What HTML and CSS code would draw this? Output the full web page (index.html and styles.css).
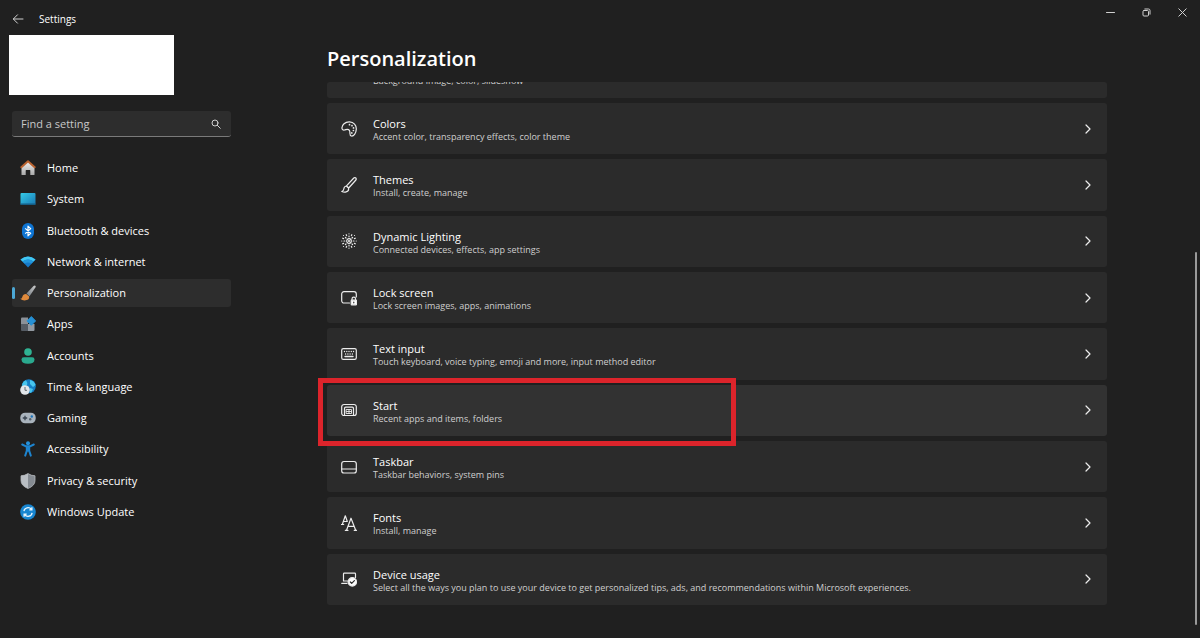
FILE: index.html
```html
<!DOCTYPE html>
<html lang="en">
<head>
<meta charset="utf-8">
<meta name="viewport" content="width=device-width, initial-scale=1">
<title>Settings</title>
<link rel="stylesheet" href="styles.css">
</head>
<body>
<div class="window">
  <header class="titlebar">
    <button class="back" type="button" aria-label="Back">
      <svg width="12" height="12" viewBox="0 0 12 12" class="line thin"><path d="M11 6H1.500M5.500 1.800L1.300 6l4.200 4.200"/></svg>
    </button>
    <span class="app-name">Settings</span>
    <div class="controls">
      <button type="button" aria-label="Minimize"><svg width="9" height="9" viewBox="0 0 9 9" class="line thin"><path d="M.5 4.500h8"/></svg></button>
      <button type="button" aria-label="Restore"><svg width="9" height="9" viewBox="0 0 9 9" class="line thin"><rect x="1" y="2.500" width="5.500" height="5.500" rx="1"/><path d="M2.800 1h3.700A1.500 1.500 0 0 1 8 2.500v3.700"/></svg></button>
      <button type="button" aria-label="Close"><svg width="9" height="9" viewBox="0 0 9 9" class="line thin"><path d="M.8.8l7.400 7.400M8.200.8L.8 8.200"/></svg></button>
    </div>
  </header>

  <div class="body">
    <aside class="sidebar">
      <div class="account"></div>
      <form class="search" role="search">
        <input type="search" aria-label="Find a setting" placeholder="Find a setting">
        <button type="submit" aria-label="Search"><svg width="10" height="10" viewBox="0 0 10 10" class="line thin"><circle cx="4" cy="4" r="3"/><path d="M6.300 6.300L9.300 9.300"/></svg></button>
      </form>
      <nav class="nav">
        <a href="#home"><svg width="16" height="16" viewBox="0 0 16 16"><defs><linearGradient id="wall" x2="0" y2="1"><stop stop-color="#f2f2f2"/><stop offset="1" stop-color="#a9a9a9"/></linearGradient></defs><path d="M1.500 7L8 1l6.500 6v7.500q0 .5-.5.500H10.300v-4.500q0-.5-.5-.5H6.200q-.5 0-.5.5V15H2q-.5 0-.5-.5z" fill="url(#wall)"/><path d="M1.300 7.200L8 1.300l6.700 5.900" fill="none" stroke="#b9622f" stroke-width="2" stroke-linecap="round" stroke-linejoin="round"/></svg>Home</a>
        <a href="#system"><svg width="16" height="16" viewBox="0 0 16 16"><defs><linearGradient id="screen" x2="1" y2="1"><stop stop-color="#35cbe8"/><stop offset="1" stop-color="#1878b4"/></linearGradient></defs><rect x=".5" y="2" width="15" height="12" rx="1" fill="url(#screen)"/><path d="M.5 12.500h15v.5a1 1 0 0 1-1 1h-13a1 1 0 0 1-1-1z" fill="#155d84"/></svg>System</a>
        <a href="#bluetooth"><svg width="16" height="16" viewBox="0 0 16 16"><rect x="2" y="0" width="12" height="16" rx="6" fill="#0e74d2"/><path d="M5.200 5.400l5.500 5-2.700 2.400V3.200l2.700 2.400-5.500 5" fill="none" stroke="#fff" stroke-width="1.200" stroke-linejoin="round"/></svg>Bluetooth &amp; devices</a>
        <a href="#network"><svg width="16" height="16" viewBox="0 0 16 16"><path d="M.5 5.500Q8-.5 15.500 5.500L8 13.500z" fill="#1679c8"/><path d="M.5 5.500Q8-.5 15.500 5.500l-2 2.100Q8 3.500 2.500 7.600z" fill="#41c7f2"/><path d="M2.500 7.600Q8 3.500 13.500 7.600l-2 2Q8 7.400 4.500 9.600z" fill="#2297dc"/></svg>Network &amp; internet</a>
        <a href="#personalization" class="current" aria-current="page"><svg width="16" height="16" viewBox="0 0 16 16"><defs><linearGradient id="handle" x1="1" x2="0" y2="1"><stop stop-color="#ccc"/><stop offset="1" stop-color="#737b82"/></linearGradient></defs><path d="M15.300.7q.8.7.1 1.900L9.500 11.200 6.500 8.500 13.500 1q1-.9 1.800-.3z" fill="url(#handle)"/><path d="M6.200 8.900l3 2.700q.4 3.800-4.700 3.900-2.500 0-4.300-1.700 1.700-.1 2.100-1.900.6-3.100 3.900-3z" fill="#e08a3c"/></svg>Personalization</a>
        <a href="#apps"><svg width="16" height="16" viewBox="0 0 16 16"><path d="M2 1.500h6v6.500H1V2.500q0-1 1-1z" fill="#8b9198"/><path d="M1 8h7v7H2q-1 0-1-1z" fill="#555c64"/><path d="M8 8h6.500v6q0 1-1 1H8z" fill="#9299a1"/><path d="M11.300.5l4.300 4.400-4.300 4.400L7 4.900z" fill="#2590d4" stroke="#2590d4" stroke-linejoin="round"/></svg>Apps</a>
        <a href="#accounts"><svg width="16" height="16" viewBox="0 0 16 16"><circle cx="8" cy="4" r="3.800" fill="#2fb393"/><path d="M3.800 9.200h8.400q2.300 0 2.300 2.200 0 4.300-6.500 4.300t-6.500-4.300q0-2.200 2.300-2.200z" fill="#2aa98e"/></svg>Accounts</a>
        <a href="#time"><svg width="16" height="16" viewBox="0 0 16 16"><circle cx="8.800" cy="7.200" r="7" fill="#167fc4"/><path d="M5.500 1.200Q8 3 7 6L2.200 8Q1.500 3.500 5.500 1.200zM10 1q4.500 1 5.500 5l-2.500 2-3-3zM10 9l3 1-1.500 3.200L10 14z" fill="#47c5ed"/><circle cx="5" cy="11" r="4.800" fill="#e2e6ea"/><path d="M5 8v3.300h2" fill="none" stroke="#626970"/></svg>Time &amp; language</a>
        <a href="#gaming"><svg width="16" height="16" viewBox="0 0 16 16"><rect x=".3" y="2.700" width="15.400" height="10.600" rx="4.800" fill="#a9b3bc"/><path d="M5 5.800v4.400M2.800 8h4.400" stroke="#38434f" stroke-width="1.300"/><circle cx="11.800" cy="6.500" r="1.200" fill="#1974bd"/><circle cx="10.200" cy="9.300" r="1.200" fill="#52616d"/></svg>Gaming</a>
        <a href="#accessibility"><svg width="16" height="16" viewBox="0 0 16 16"><circle cx="8" cy="2.300" r="2" fill="#2492dc"/><path d="M2.200 3.500L6 5.300h4l3.800-1.800M6.800 5.800v4.100L5.200 14.600M9.200 5.800v4.100l1.600 4.700" fill="none" stroke="#1d84cf" stroke-width="2" stroke-linecap="round" stroke-linejoin="round"/><path d="M6.500 5h3v5.500h-3z" fill="#1d84cf"/></svg>Accessibility</a>
        <a href="#privacy"><svg width="16" height="16" viewBox="0 0 16 16"><path d="M8 .6q3 2.100 7 2.200v4.700q0 5.200-7 8z" fill="#858b92"/><path d="M8 .6Q5 2.700 1 2.800v4.700q0 5.200 7 8z" fill="#b9bec3"/><path d="M8 .6q3 2.100 7 2.200v4.700q0 5.200-7 8-7-2.800-7-8V2.800Q5 2.700 8 .6z" fill="none" stroke="#b5b9bd" stroke-width=".8"/></svg>Privacy &amp; security</a>
        <a href="#update"><svg width="16" height="16" viewBox="0 0 16 16"><circle cx="8" cy="8" r="7.800" fill="#1786d1"/><path d="M3.900 7.200a4.200 4.200 0 0 1 7.500-1.900M12.100 8.800a4.200 4.200 0 0 1-7.500 1.900M11.900 3.200v2.600H9.300M4.100 12.800v-2.600h2.600" fill="none" stroke="#e8f5fd" stroke-width="1.300"/></svg>Windows Update</a>
      </nav>
    </aside>

    <main class="content">
      <h1>Personalization</h1>
      <button class="card scrolled" type="button"><span class="icon"></span><span class="hint">Background image, color, slideshow</span></button>
      <div class="cards">
        <button class="card" type="button">
          <svg class="icon line" width="16" height="16" viewBox="0 0 16 16"><path d="M1 7.500C.5 4 4.400.7 8.500.9c4.200.2 7 3.200 6.800 7.200-.2 4.500-2.700 7.200-4.900 6.900-2.600-.4-.7-3.700-2-5.600C7 7.300 5.300 8.600 3.600 9 2 9.300 1.200 8.700 1 7.500z"/><path d="M8.500 3.700h.01M11 4.700h.01M12.500 6.900h.01M12.400 9.500h.01M10.800 11.900h.01" stroke-width="1.700"/></svg>
          <span class="text"><span class="name">Colors</span><span class="hint">Accent color, transparency effects, color theme</span></span>
          <svg class="chevron line" width="6" height="10" viewBox="0 0 6 10"><path d="M1 1l4 4-4 4"/></svg>
        </button>
        <button class="card" type="button">
          <svg class="icon line" width="16" height="16" viewBox="0 0 16 16"><path d="M5.500 8.800L12.800 1q1.100-.8 2 0 .8.900.1 2L7.700 11zM5.300 9Q3 9.400 2.800 12q-.2 1.700-2 2.500 2.200 1 4.300.4 3.100-.8 2.400-3.800z"/></svg>
          <span class="text"><span class="name">Themes</span><span class="hint">Install, create, manage</span></span>
          <svg class="chevron line" width="6" height="10" viewBox="0 0 6 10"><path d="M1 1l4 4-4 4"/></svg>
        </button>
        <button class="card" type="button">
          <svg class="icon line" width="16" height="16" viewBox="0 0 16 16"><circle cx="8" cy="8" r="2.300"/><circle cx="8" cy="8" r=".5"/><path d="M8 3.800V3M8 12.200v.8M3.800 8H3M12.200 8h.8M5 5l-.6-.6M11 11l.6.6M5 11l-.6.6M11 5l.6-.6M8 .8v.01M8 15.200v.01M.8 8h.01M15.200 8h.01M2.500 2.500h.01M13.500 2.500h.01M2.500 13.500h.01M13.500 13.500h.01M5.200 1.700l.4.900M10.800 1.700l-.4.900M5.200 14.300l.4-.9M10.800 14.300l-.4-.9M1.700 5.200l.9.400M14.300 5.200l-.9.400M1.700 10.800l.9-.4M14.300 10.800l-.9-.4"/></svg>
          <span class="text"><span class="name">Dynamic Lighting</span><span class="hint">Connected devices, effects, app settings</span></span>
          <svg class="chevron line" width="6" height="10" viewBox="0 0 6 10"><path d="M1 1l4 4-4 4"/></svg>
        </button>
        <button class="card" type="button">
          <svg class="icon line" width="16" height="16" viewBox="0 0 16 16"><path d="M8.500 13H3a2.300 2.300 0 0 1-2.300-2.300V4A2.300 2.300 0 0 1 3 1.700h10A2.300 2.300 0 0 1 15.300 4v3"/><path d="M11 10V9a1.800 1.800 0 0 1 3.600 0v1"/><rect x="10.200" y="10.200" width="5.300" height="4.600" rx=".6" fill="#fff"/><path d="M12.800 12.200v.6" stroke="#2b2b2b"/></svg>
          <span class="text"><span class="name">Lock screen</span><span class="hint">Lock screen images, apps, animations</span></span>
          <svg class="chevron line" width="6" height="10" viewBox="0 0 6 10"><path d="M1 1l4 4-4 4"/></svg>
        </button>
        <button class="card" type="button">
          <svg class="icon line" width="16" height="16" viewBox="0 0 16 16"><rect x=".7" y="2.700" width="14.600" height="10.600" rx="1.600"/><path d="M4 10.500h8M3.500 5.500h.01M5.800 5.500h.01M8 5.500h.01M10.300 5.500h.01M12.500 5.500h.01M4.600 8h.01M6.900 8h.01M9.100 8h.01M11.400 8h.01" stroke-width="1.400"/></svg>
          <span class="text"><span class="name">Text input</span><span class="hint">Touch keyboard, voice typing, emoji and more, input method editor</span></span>
          <svg class="chevron line" width="6" height="10" viewBox="0 0 6 10"><path d="M1 1l4 4-4 4"/></svg>
        </button>
        <button class="card hovered" type="button">
          <svg class="icon line" width="16" height="16" viewBox="0 0 16 16"><path d="M3.500 13.500H3A2.300 2.300 0 0 1 .7 11.200V4.800A2.300 2.300 0 0 1 3 2.500h10a2.300 2.300 0 0 1 2.300 2.300v6.400A2.300 2.300 0 0 1 13 13.500z"/><path d="M3.500 13.500V6.500a1.300 1.300 0 0 1 1.300-1.300h6.400a1.300 1.300 0 0 1 1.300 1.300v7"/><path d="M5.500 7.500h5v4h-5zM8 7.500v4M5.500 9.500h5" stroke-width=".9"/></svg>
          <span class="text"><span class="name">Start</span><span class="hint">Recent apps and items, folders</span></span>
          <svg class="chevron line" width="6" height="10" viewBox="0 0 6 10"><path d="M1 1l4 4-4 4"/></svg>
          <span class="highlight"></span>
        </button>
        <button class="card" type="button">
          <svg class="icon line" width="16" height="16" viewBox="0 0 16 16"><rect x=".7" y="2.500" width="14.600" height="11.500" rx="2.300"/><path d="M.7 10h14.600"/></svg>
          <span class="text"><span class="name">Taskbar</span><span class="hint">Taskbar behaviors, system pins</span></span>
          <svg class="chevron line" width="6" height="10" viewBox="0 0 6 10"><path d="M1 1l4 4-4 4"/></svg>
        </button>
        <button class="card" type="button">
          <svg class="icon line" width="16" height="16" viewBox="0 0 16 16"><path d="M1.300 9.500L4.300.8l2 5.700M2.500 6.500h3.300M.5 9.500h2.200M5.500 15.300L10 3.200l4.700 12.100M7 11.300h6M4.300 15.300H7M13.200 15.300h2.500"/></svg>
          <span class="text"><span class="name">Fonts</span><span class="hint">Install, manage</span></span>
          <svg class="chevron line" width="6" height="10" viewBox="0 0 6 10"><path d="M1 1l4 4-4 4"/></svg>
        </button>
        <button class="card" type="button">
          <svg class="icon line" width="16" height="16" viewBox="0 0 16 16"><path d="M.7 12.300H6M2.500 10V3q0-.8.8-.8h10.400q.8 0 .8.800v3.500M2.500 10H6.500"/><circle cx="11.300" cy="10.900" r="4.200" fill="#fff"/><path d="M9.300 11l1.400 1.400 2.700-2.800" stroke="#2b2b2b"/></svg>
          <span class="text"><span class="name">Device usage</span><span class="hint">Select all the ways you plan to use your device to get personalized tips, ads, and recommendations within Microsoft experiences.</span></span>
          <svg class="chevron line" width="6" height="10" viewBox="0 0 6 10"><path d="M1 1l4 4-4 4"/></svg>
        </button>
      </div>
      <div class="scroll-thumb"></div>
    </main>
  </div>
</div>
</body>
</html>
```
FILE: styles.css
```css
* { box-sizing: border-box; }

body {
  margin: 0;
  background: #202020;
  color: #fff;
  font-family: "Open Sans", "Noto Sans", sans-serif;
  font-size: 11px;
  line-height: 16px;
}

button {
  border: 0;
  padding: 0;
  background: none;
  color: inherit;
  font: inherit;
  text-align: left;
}

svg { display: block; flex: none; }

.line {
  fill: none;
  stroke: #ececec;
  stroke-width: 1.2;
  stroke-linecap: round;
  stroke-linejoin: round;
}

.thin {
  stroke: #d0d0d0;
  stroke-width: 1;
}

.window {
  display: flex;
  flex-direction: column;
  min-height: 100vh;
}

.titlebar {
  display: flex;
  align-items: center;
  gap: 15px;
  padding: 3px 0 0 12px;
  height: 35px;
}

.app-name { font-size: 10px; }

.controls {
  display: flex;
  align-self: flex-start;
  margin-left: auto;
}

.controls button {
  display: grid;
  place-items: center;
  width: 36px;
  height: 18px;
}

.body {
  display: flex;
  flex: 1;
}

.sidebar {
  flex: none;
  width: 231px;
}

.account {
  width: 165px;
  height: 60px;
  margin-left: 9px;
  background: #fff;
}

.search {
  display: flex;
  align-items: center;
  height: 26px;
  margin: 16px 0 17px 12px;
  padding: 0 10px 0 9px;
  border-bottom: 1px solid #7a7a7a;
  border-radius: 3px;
  background: #2d2d2d;
}

.search input {
  flex: 1;
  min-width: 0;
  padding: 0;
  border: 0;
  outline: 0;
  background: none;
  color: #fff;
  font: inherit;
}

.search input::placeholder { color: #c8c8c8; }

.nav {
  display: flex;
  flex-direction: column;
  justify-content: space-between;
  min-height: 372px;
  margin-left: 12px;
}

.nav a {
  position: relative;
  display: flex;
  align-items: center;
  gap: 11px;
  height: 28px;
  padding-left: 8px;
  border-radius: 3px;
  color: #fff;
  text-decoration: none;
}

.nav .current { background: #2d2d2d; }

.nav .current::before {
  content: "";
  position: absolute;
  left: 0;
  top: 8px;
  width: 3px;
  height: 12px;
  border-radius: 2px;
  background: #4ca8d6;
}

.content {
  position: relative;
  display: flex;
  flex: 1;
  flex-direction: column;
  min-width: 0;
  padding: 0 93px 33px 96px;
}

h1 {
  margin: 0;
  font-size: 20px;
  font-weight: 600;
  line-height: 47px;
}

.cards {
  display: flex;
  flex: 1;
  flex-direction: column;
  gap: 5px;
  margin-top: 5px;
}

.card {
  position: relative;
  display: flex;
  flex: 1 0 auto;
  align-items: center;
  width: 100%;
  min-height: 51px;
  padding: 0 16px 0 14px;
  border-radius: 3px;
  background: #2b2b2b;
}

.scrolled {
  flex: none;
  align-items: flex-end;
  height: 16px;
  min-height: 0;
  padding-bottom: 11px;
  overflow: hidden;
}

.hovered { background: #323232; }

.icon {
  flex: none;
  width: 16px;
  margin-right: 16px;
}

.text {
  display: flex;
  flex: 1;
  flex-direction: column;
  padding-top: 3px;
}

.name { line-height: 14px; }

.hint {
  color: #cfcfcf;
  font-size: 9px;
  line-height: 12px;
}

.highlight {
  position: absolute;
  z-index: 1;
  top: -7px;
  bottom: -10px;
  left: -9px;
  width: 418px;
  border: 5px solid #dc242b;
}

.scroll-thumb {
  position: absolute;
  top: 217px;
  right: 3px;
  bottom: 13px;
  width: 2px;
  border-radius: 1px;
  background: #9a9a9a;
}
```
